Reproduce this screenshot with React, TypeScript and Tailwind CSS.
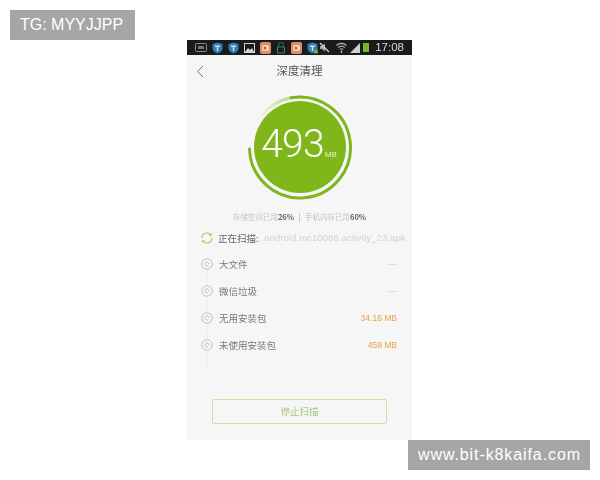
import React from 'react';

const FONT = 'font-["Noto_Sans_CJK_SC","Liberation_Sans",sans-serif]';

const ShieldIcon = ({ badge }: { badge?: boolean }) => (
  <svg width="11" height="12" viewBox="0 0 11 12" className="shrink-0">
    <path d="M5.5 0.5 L10.5 2 V6 C10.5 9 8 10.8 5.5 11.5 C3 10.8 0.5 9 0.5 6 V2 Z" fill="#2f7fb8" />
    <path d="M3 3.5 H8 V5 H6.2 V9 H4.8 V5 H3 Z" fill="#cfe6f5" />
    {badge && <circle cx="9" cy="9.5" r="2.2" fill="#6aa84f" />}
  </svg>
);

const WeiboIcon = () => (
  <svg width="11" height="12" viewBox="0 0 11 12" className="shrink-0">
    <rect x="0" y="0" width="11" height="12" rx="2" fill="#e58a68" />
    <rect x="2" y="3" width="7" height="6" rx="2.5" fill="#f6d9c8" />
    <circle cx="5" cy="6" r="1.5" fill="#c9593a" />
  </svg>
);

const StatusBar = () => (
  <div className="h-[15px] bg-[#1b1b1b] flex items-center pl-[8px] pr-[8px]">
    <div className="flex items-center gap-[5px]">
      <svg width="12" height="9" viewBox="0 0 12 9" className="shrink-0">
        <rect x="0.5" y="0.5" width="11" height="8" rx="1" fill="none" stroke="#8a8a8a" />
        <rect x="3" y="3" width="6" height="3" fill="#777" />
      </svg>
      <ShieldIcon />
      <ShieldIcon />
      <svg width="11" height="10" viewBox="0 0 11 10" className="shrink-0">
        <rect x="0.5" y="0.5" width="10" height="9" fill="none" stroke="#d5d5d5" />
        <path d="M1 9 L4 5 L6 7 L8 5 L10 9 Z" fill="#d5d5d5" />
      </svg>
      <WeiboIcon />
      <svg width="10" height="12" viewBox="0 0 10 12" className="shrink-0">
        <path d="M2.5 5 V3 A2.5 2.5 0 0 1 7.5 3 V5" fill="none" stroke="#245f4a" strokeWidth="1.2" />
        <rect x="1.5" y="5" width="7" height="6" rx="1" fill="none" stroke="#2f8a5f" strokeWidth="1.2" />
      </svg>
      <WeiboIcon />
      <ShieldIcon badge />
    </div>
    <div className="ml-auto flex items-center gap-[3px]">
      <svg width="11" height="11" viewBox="0 0 11 11" className="shrink-0 mr-[3px]">
        <path d="M1 4 H3 L6 1.5 V9.5 L3 7 H1 Z" fill="#a8a8a8" />
        <path d="M1 1 L10 10" stroke="#d8d8d8" strokeWidth="1.2" />
      </svg>
      <svg width="11" height="11" viewBox="0 0 11 11" className="shrink-0">
        <path d="M0.5 3.5 A7 7 0 0 1 10.5 3.5 M2.2 5.5 A4.6 4.6 0 0 1 8.8 5.5 M3.8 7.4 A2.4 2.4 0 0 1 7.2 7.4" fill="none" stroke="#b5b5b5" strokeWidth="1.1" />
        <path d="M5.5 8.5 V11" stroke="#b5b5b5" strokeWidth="1.4" />
      </svg>
      <svg width="10" height="10" viewBox="0 0 10 10" className="shrink-0">
        <path d="M0 10 L10 0 V10 Z" fill="#d0d0d0" />
      </svg>
      <div className="w-[6px] h-[9px] bg-[#7cb32a] shrink-0" />
      <span className="ml-[3px] text-[11.5px] leading-none text-[#d8d8d8] font-['Liberation_Sans',sans-serif]">17:08</span>
    </div>
  </div>
);

const ScanRing = () => (
  <svg width="106" height="106" viewBox="0 0 106 106" className="absolute left-0 top-0">
    <defs>
      <linearGradient id="fade" x1="1" y1="0" x2="0" y2="1">
        <stop offset="0" stopColor="#bcdc8c" />
        <stop offset="1" stopColor="#f3f6ee" />
      </linearGradient>
    </defs>
    <path d="M44 3.8 A50.5 50.5 0 0 0 13 24" fill="none" stroke="url(#fade)" strokeWidth="3" />
    <path d="M2.5 55 A50.5 50.5 0 1 0 44 3.8" fill="none" stroke="#7fb51e" strokeWidth="3" strokeLinecap="round" />
  </svg>
);

const Gauge = () => (
  <div className="relative w-[106px] h-[106px] flex items-center justify-center">
    <ScanRing />
    <div className="w-[92px] h-[92px] rounded-full bg-[#7fb71b] flex items-baseline justify-center pt-[20px] pr-[1px] text-white font-['Roboto',sans-serif]">
      <span className="text-[39px] leading-[46px] font-light tracking-[-0.8px]">493</span>
      <span className="ml-[1px] text-[8px] leading-none text-[#dfeebf]">MB</span>
    </div>
  </div>
);

const RowIcon = () => (
  <svg width="12" height="12" viewBox="0 0 12 12" className="shrink-0 bg-[#f6f6f6] rounded-full">
    <circle cx="6" cy="6" r="5.3" fill="none" stroke="#bbbbbb" />
    <path d="M8 6 A2 2 0 1 0 7.4 7.4" fill="none" stroke="#bbbbbb" />
  </svg>
);

const rows = [
  { name: '大文件', value: '—', muted: true },
  { name: '微信垃圾', value: '—', muted: true },
  { name: '无用安装包', value: '34.16 MB', muted: false },
  { name: '未使用安装包', value: '459 MB', muted: false },
];

export default function App() {
  return (
    <div className={`relative w-[600px] h-[480px] bg-white overflow-hidden ${FONT}`}>
      <div className="absolute left-[10px] top-[10px] w-[125px] h-[30px] bg-[#a6a6a6] flex items-center pl-[10px] text-[16px] text-white font-['Liberation_Sans',sans-serif] font-light">
        TG: MYYJJPP
      </div>
      <div className="absolute left-[408px] top-[440px] w-[182px] h-[30px] bg-[#a6a6a6] flex items-center pl-[10px] text-[16px] tracking-[0.9px] text-white font-['Liberation_Sans',sans-serif]">
        www.bit-k8kaifa.com
      </div>

      <div className="pt-[40px] pl-[187px]">
        <div className="w-[225px] h-[400px] bg-[#f6f6f6] flex flex-col blur-[0.35px]">
          <StatusBar />
          <div className="relative h-[32px] flex items-center justify-center text-[11.5px] text-[#555]">
            <svg width="8" height="13" viewBox="0 0 8 13" className="absolute left-[9px] top-[10px]">
              <path d="M7 1 L1.5 6.5 L7 12" fill="none" stroke="#777" strokeWidth="1" />
            </svg>
            深度清理
          </div>

          <div className="flex justify-center pt-[7px]">
            <Gauge />
          </div>

          <div className="mt-[11px] flex items-center justify-center text-[7.5px] leading-[12px] text-[#c4c4c4]">
            <span>存储空间已用</span>
            <span className="text-[#666] font-semibold">26%</span>
            <span className="mx-[5px] w-px h-[9px] bg-[#c9c9c9]" />
            <span>手机内存已用</span>
            <span className="text-[#666] font-semibold">60%</span>
          </div>

          <div className="mt-[7px] pl-[14px] flex items-center h-[16px]">
            <svg width="12" height="12" viewBox="0 0 12 12" className="shrink-0">
              <path d="M1 6 A5 5 0 0 1 10 3" fill="none" stroke="#a6c85c" strokeWidth="1.1" />
              <path d="M11 6 A5 5 0 0 1 2 9" fill="none" stroke="#a6c85c" strokeWidth="1.1" />
              <path d="M10.5 1 V3.5 H8 M1.5 11 V8.5 H4" fill="none" stroke="#a6c85c" strokeWidth="0.8" />
            </svg>
            <span className="ml-[5px] text-[9.5px] text-[#666] whitespace-nowrap">正在扫描:</span>
            <span className="text-[9.7px] text-[#d2d2d2] whitespace-nowrap font-['Liberation_Sans',sans-serif]">..android.mc10086.activity_23.apk</span>
          </div>

          <div className="relative mt-[10px] pl-[14px] pr-[15px] flex flex-col gap-[11px]">
            <div className="absolute left-[19px] top-[10px] w-[2px] h-[102px] bg-[#f0f0f0]" />
            {rows.map(row => (
              <div key={row.name} className="relative h-[16px] flex items-center">
                <RowIcon />
                <span className="ml-[6px] text-[9.5px] text-[#777]">{row.name}</span>
                <span className={`ml-auto text-[8.5px] font-['Liberation_Sans',sans-serif] ${row.muted ? 'text-[#cfcfcf]' : 'text-[#e8a04e]'}`}>{row.value}</span>
              </div>
            ))}
          </div>

          <div className="mt-auto mb-[16px] mx-[25px] h-[25px] rounded-[2px] border border-[#d2deaa] flex items-center justify-center text-[9.5px] text-[#a9c67c]">
            停止扫描
          </div>
        </div>
      </div>
    </div>
  );
}
